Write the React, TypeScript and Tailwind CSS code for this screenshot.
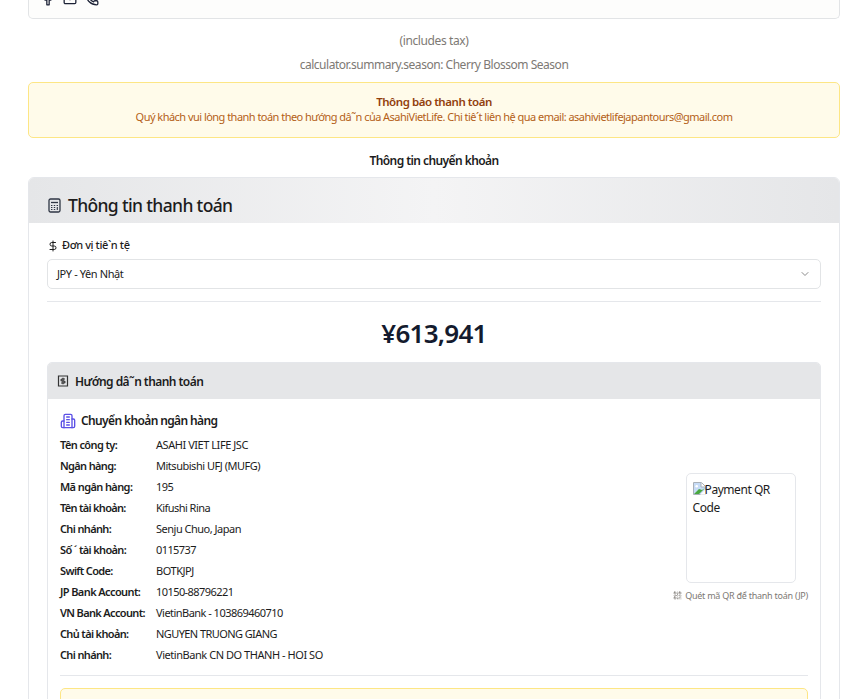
import { ChevronDown, DollarSign, Facebook, Mail, Phone, QrCode } from "lucide-react";

const accounts: [string, string, string, string][] = [
  ["Tên công ty:", "ASAHI VIET LIFE JSC", "tracking-[-0.6px]", "tracking-[-0.45px]"],
  ["Ngân hàng:", "Mitsubishi UFJ (MUFG)", "tracking-[-0.65px]", "tracking-[-0.48px]"],
  ["Mã ngân hàng:", "195", "tracking-[-0.6px]", "tracking-[-0.6px]"],
  ["Tên tài khoản:", "Kifushi Rina", "tracking-[-0.7px]", "tracking-[-0.55px]"],
  ["Chi nhánh:", "Senju Chuo, Japan", "tracking-[-0.65px]", "tracking-[-0.5px]"],
  ["Số ´ tài khoản:", "0115737", "tracking-[-0.65px]", "tracking-[-0.6px]"],
  ["Swift Code:", "BOTKJPJ", "tracking-[-0.65px]", "tracking-[-0.45px]"],
  ["JP Bank Account:", "10150-88796221", "tracking-[-0.6px]", "tracking-[-0.57px]"],
  ["VN Bank Account:", "VietinBank - 103869460710", "tracking-[-0.65px]", "tracking-[-0.53px]"],
  ["Chủ tài khoản:", "NGUYEN TRUONG GIANG", "tracking-[-0.65px]", "tracking-[-0.58px]"],
  ["Chi nhánh:", "VietinBank CN DO THANH - HOI SO", "tracking-[-0.65px]", "tracking-[-0.45px]"],
];

function CalculatorIcon() {
  return (
    <svg width="13" height="15" viewBox="0 0 13 15" fill="none" stroke="#2f3644">
      <rect x="1" y="1" width="11" height="13" rx="1.5" strokeWidth="1.3" />
      <path d="M3 4.5h7" strokeWidth="1.3" />
      <path d="M3 7.5h1.4M5.8 7.5h1.4M8.6 7.5H10M3 9.5h1.4M5.8 9.5h1.4M3 11.5h1.4M5.8 11.5h1.4M9.3 9v3" strokeWidth="1.1" />
    </svg>
  );
}

function BillIcon() {
  return (
    <svg width="12" height="12" viewBox="0 0 24 24" fill="none" stroke="#333" strokeWidth="2.4">
      <path d="M3 2h18v20H3z" />
      <path d="M16 8h-6a2 2 0 0 0 0 4h4a2 2 0 0 1 0 4H8M12 5.5v13" />
    </svg>
  );
}

function BankIcon() {
  return (
    <svg width="16" height="16" viewBox="0 0 24 24" fill="none" stroke="#5b50e6" strokeWidth="2" strokeLinecap="round" strokeLinejoin="round">
      <path d="M6 22V4a2 2 0 0 1 2-2h8a2 2 0 0 1 2 2v18Z" />
      <path d="M6 12H4a2 2 0 0 0-2 2v6a2 2 0 0 0 2 2h2M18 9h2a2 2 0 0 1 2 2v9a2 2 0 0 1-2 2h-2" />
      <path d="M10 6h4M10 10h4M10 14h4M10 18h4" />
    </svg>
  );
}

function BrokenImage() {
  return (
    <svg width="13" height="13" viewBox="0 0 13 13" className="mr-[-1px] inline-block align-[-1px]">
      <path d="M.5.5h8l4 4v8H.5z" fill="#fff" stroke="#a9b0b8" />
      <path d="M1 1h7v4h4v3L8 12H1z" fill="#c6dbf6" />
      <path d="M1 12l5-5 3 1 3-2-6 6z" fill="#49a83f" />
      <path d="M8 1v4h4" fill="#fff" stroke="#a9b0b8" />
      <path d="M7 12.8l5.8-5.3v5.3z" fill="#fff" />
      <circle cx="3.7" cy="4.2" r="1.3" fill="#fff" />
    </svg>
  );
}

export default function App() {
  return (
    <main className="h-[699px] overflow-hidden bg-white px-[28px] pr-[24px] font-['Noto_Sans',sans-serif] text-[#1c1c1c]">
      <section className="h-[19px] overflow-hidden rounded-b-[5px] border border-t-0 border-[#e2e4e6] bg-[#fdfdfc]">
        <div className="-mt-[8px] flex gap-[8px] pl-[12px] text-[#1c2236]">
          <Facebook size={14} strokeWidth={2.2} />
          <Mail size={14} strokeWidth={2.2} />
          <Phone size={14} strokeWidth={2.2} />
        </div>
      </section>

      <p className="mt-[13px] text-center text-[12px] leading-[18px] tracking-[-0.38px] text-[#7d7974]">(includes tax)</p>
      <p className="mt-[6px] text-center text-[12px] leading-[18px] tracking-[-0.47px] text-[#7d7974]">calculator.summary.season: Cherry Blossom Season</p>

      <section className="mt-[8px] h-[56px] rounded-[5px] border border-[#fde685] bg-[#fffbea] pt-[10px] text-center">
        <h3 className="text-[11.5px] leading-[17px] font-semibold tracking-[-0.45px] text-[#92400e]">Thông báo thanh toán</h3>
        <p className="text-[11px] leading-[14px] tracking-[-0.53px] text-[#b45f18]">Quý khách vui lòng thanh toán theo hướng dâ˜n của AsahiVietLife. Chi tiê´t liên hệ qua email: asahivietlifejapantours@gmail.com</p>
      </section>

      <h2 className="mt-[14px] text-center text-[12px] leading-[18px] font-semibold tracking-[-0.57px]">Thông tin chuyển khoản</h2>

      <section className="mt-[7px] h-[540px] rounded-t-[6px] border border-[#e5e7eb]">
        <header className="flex h-[45px] items-center gap-[7px] rounded-t-[5px] bg-linear-to-r from-[#e5e6e8] via-[#f4f4f5] to-[#e5e6e8] pt-[9px] pl-[19px]">
          <CalculatorIcon />
          <h1 className="text-[17.5px] leading-[24px] font-medium tracking-[-0.65px]">Thông tin thanh toán</h1>
        </header>
        <div className="px-[18px]">
          <div className="flex h-[36px] items-end gap-[3px] pb-[6px]">
            <DollarSign size={12} className="mb-px" />
            <span className="text-[11px] leading-[16px] font-medium tracking-[-0.4px]">Đơn vị tiê`n tệ</span>
          </div>
          <div className="flex h-[30px] items-center justify-between rounded-[5px] border border-[#e2e4e6] px-[9px]">
            <span className="text-[11px] tracking-[-0.4px]">JPY - Yên Nhật</span>
            <ChevronDown size={12} className="text-[#8b8b8b]" />
          </div>
          <div className="mt-[12px] h-px bg-[#e5e7eb]" />
          <div className="flex h-[60px] items-center justify-center pt-[2px] text-[26px] font-semibold tracking-[-0.75px] text-[#141b2e]">¥613,941</div>

          <section className="h-[350px] rounded-t-[5px] border border-[#e5e7eb]">
            <header className="flex h-[36px] items-center gap-[6px] rounded-t-[4px] bg-[#e5e6e8] pl-[9px]">
              <BillIcon />
              <h2 className="pt-[2px] text-[12px] font-semibold tracking-[-0.55px]">Hướng dâ˜n thanh toán</h2>
            </header>
            <div className="px-[12px] pt-[13px]">
              <div className="flex h-[18px] items-center gap-[5px]">
                <BankIcon />
                <h3 className="text-[12px] font-semibold tracking-[-0.62px]">Chuyển khoản ngân hàng</h3>
              </div>
              <div className="mt-[5px] flex h-[231px] items-center justify-between">
                <dl>
                  {accounts.map(([label, value, labelClass, valueClass]) => (
                    <div key={label + value} className="flex h-[21px] items-center text-[11px] whitespace-nowrap">
                      <dt className={"w-[96px] font-semibold " + labelClass}>{label}</dt>
                      <dd className={valueClass}>{value}</dd>
                    </div>
                  ))}
                </dl>
                <div className="flex flex-col items-center pb-[28px]">
                  <div className="mt-[2px] h-[110px] w-[110px] rounded-[5px] border border-[#e5e7eb] px-[6px] pt-[7px] text-[12px] leading-[18px] tracking-[-0.45px]">
                    <BrokenImage />Payment QR Code
                  </div>
                  <div className="mt-[6px] flex items-center gap-[3px] text-[9px] leading-[14px] tracking-[-0.25px] text-[#7d7974]">
                    <QrCode size={9} />Quét mã QR để thanh toán (JP)
                  </div>
                </div>
              </div>
              <div className="mt-[9px] h-px bg-[#e5e7eb]" />
              <div className="mt-[12px] h-[40px] rounded-[5px] border border-[#fde685] bg-[#fffbea]" />
            </div>
          </section>
        </div>
      </section>
    </main>
  );
}
